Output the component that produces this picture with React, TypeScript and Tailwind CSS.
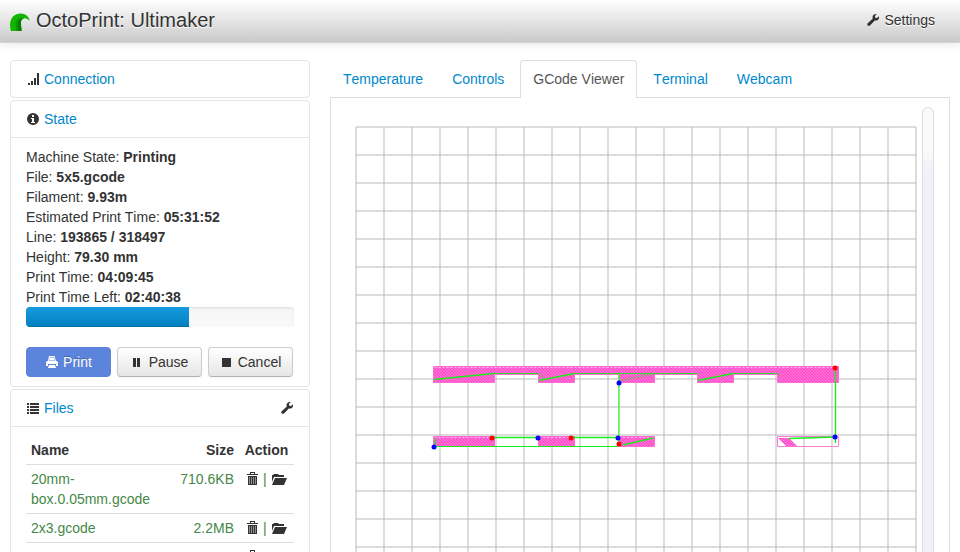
import type { ReactNode } from "react";

const ICON = "h-3.5 w-3.5 shrink-0 fill-current";

function SignalIcon() {
  return (
    <svg viewBox="0 0 14 14" className={ICON} shapeRendering="crispEdges" aria-hidden="true">
      <path d="M2 11h2v2H2zM5 9h2v4H5zM8 6h2v7H8zM11 1h2v12h-2z" />
    </svg>
  );
}

function InfoIcon() {
  return (
    <svg viewBox="0 0 14 14" className={ICON} aria-hidden="true">
      <path fillRule="evenodd" d="M7 1a6 6 0 1 1 0 12A6 6 0 0 1 7 1zM6 3v2h2V3zM5 6v1h1v3H5v1h4v-1H8V6z" />
    </svg>
  );
}

function ListIcon() {
  return (
    <svg viewBox="0 0 14 14" className={ICON} shapeRendering="crispEdges" aria-hidden="true">
      <path d="M1 2h2v2H1zM4 2h9v2H4zM1 5h2v2H1zM4 5h9v2H4zM1 8h2v2H1zM4 8h9v2H4zM1 11h2v2H1zM4 11h9v2H4z" />
    </svg>
  );
}

function WrenchIcon() {
  return (
    <svg viewBox="0 0 14 14" className={ICON} aria-hidden="true">
      <path d="M10.8 1.1 8.9 3l.4 1.7 1.7.4 1.9-1.8c.4 1.3.1 2.6-.8 3.4-.9.9-2.100 1.100-3.200.7L4 12.400c-.6.6-1.600.6-2.300 0-.6-.6-.6-1.600 0-2.200l5.100-4.700c-.5-1.200-.3-2.500.6-3.400.9-.9 2.200-1.300 3.400-1z" />
    </svg>
  );
}

function PrintIcon() {
  return (
    <svg viewBox="0 0 14 14" className={ICON} aria-hidden="true">
      <path fillRule="evenodd" d="M4 1h5.500L11 6h1l1 1.500V11h-2V9H3v2H1V7.500L2 6h1zM4.700 2.500 4 6h6L9.200 2.500zM4 10h6l1 3H3z" />
      <path d="M4.500 3h4.700l.5 2.500H4z" />
    </svg>
  );
}

function PauseIcon() {
  return (
    <svg viewBox="0 0 14 14" className={ICON} shapeRendering="crispEdges" aria-hidden="true">
      <path d="M2 3h3v9H2zM6 3h3v9H6z" />
    </svg>
  );
}

function StopIcon() {
  return (
    <svg viewBox="0 0 14 14" className={ICON} shapeRendering="crispEdges" aria-hidden="true">
      <path d="M2 3h9v9H2z" />
    </svg>
  );
}

function TrashIcon() {
  return (
    <svg viewBox="-2 0 14 14" className={ICON} aria-hidden="true">
      <path d="M3 0h5v2h3v1H0V2h3zM4 1v1h3V1z" fillRule="evenodd" />
      <path d="M1 4h9v9H1z" opacity="0.55" />
      <path d="M1 4h9v1H1zM1 12h9v1H1zM1 4h1v9H1zM3 5h1v7H3zM5 5h1v7H5zM7 5h1v7H7zM9 4h1v9H9z" />
    </svg>
  );
}

function FolderIcon() {
  return (
    <svg viewBox="0 0 16 14" className="h-3.5 w-4 shrink-0 fill-current" aria-hidden="true">
      <path d="M1 3h1l1-1h4l1 1h5v2H3L1 10zM4 6h12l-3 7H1z" />
    </svg>
  );
}

function Logo() {
  return (
    <svg viewBox="0 -3 20 22" className="h-[22px] w-5 shrink-0" aria-hidden="true">
      <path d="M1 18C-1 12 .2 6.500 3 3.500 6 .6 10.500-.2 14 1c2.800 1 5 3.500 6 7-2-2-4-3-6-2.700-2.600.5-3.300 3.100-2.900 5.900.2 2.200.5 4.800.6 6.800z" fill="#12b600" />
      <path d="M14 5.300C9 4.300 6.200 7.300 6.400 11c0 2.500.3 4.800.3 7h5c-.4-2.500-1-5-.9-7.600.1-2.700 1.100-4.400 3.200-5.100z" fill="#0a7a08" />
      <path d="M14 5.300C8.800 3.900 5.300 7 5.500 11c0 2.500.6 4.800.6 7h2.100c.3-2 .1-4-.2-6-.4-3.600 2-6.300 6-6.700z" fill="#0c9a04" />
    </svg>
  );
}

function Panel({ icon, title, action, children }: { icon: ReactNode; title: string; action?: ReactNode; children?: ReactNode }) {
  return (
    <section className="mb-0.5 rounded border border-[#e5e5e5]">
      <div className="flex items-center justify-between px-[15px] py-2">
        <h2 className="flex items-center gap-1">
          {icon}
          <a href="#" className="text-[#0088cc]">{title}</a>
        </h2>
        {action}
      </div>
      {children && <div className="border-t border-[#e5e5e5] px-[15px] py-[9px]">{children}</div>}
    </section>
  );
}

const status = [
  ["Machine State", "Printing"],
  ["File", "5x5.gcode"],
  ["Filament", "9.93m"],
  ["Estimated Print Time", "05:31:52"],
  ["Line", "193865 / 318497"],
  ["Height", "79.30 mm"],
  ["Print Time", "04:09:45"],
  ["Print Time Left", "02:40:38"],
];

const files = [
  { name: "20mm-box.0.05mm.gcode", size: "710.6KB" },
  { name: "2x3.gcode", size: "2.2MB" },
];

const tabs = ["Temperature", "Controls", "GCode Viewer", "Terminal", "Webcam"];

const BUTTON = "flex h-[30px] w-[85px] items-center justify-center gap-1 rounded border";
const PLAIN =
  "border-[#cccccc] border-b-[#b3b3b3] bg-linear-to-b from-white to-[#e6e6e6] text-[#333333] shadow-[inset_0_1px_0_rgba(255,255,255,0.2),0_1px_2px_rgba(0,0,0,0.05)]";

const gridLines = Array.from({ length: 21 }, (_, i) => i * 28);

const retracts = [[479, 241], [136, 311], [215, 311], [263, 317]];
const restarts = [[263, 256], [78, 320], [182, 311], [262, 311], [479, 310]];

function GCodeCanvas() {
  return (
    <svg viewBox="-10 -20 572 600" className="h-[600px] w-[572px] shrink-0" role="img" aria-label="GCode layer">
      <defs>
        <pattern id="infill" width="3" height="3" patternUnits="userSpaceOnUse">
          <rect width="3" height="3" fill="#ff52ca" />
          <path d="M0 0l3 3M-1 2l2 2M2-1l2 2" stroke="#ff7adb" strokeWidth="1" />
        </pattern>
      </defs>
      <g stroke="#bbbbbb" strokeOpacity="0.5" strokeWidth="2">
        {gridLines.map((p) => (
          <line key={`v${p}`} x1={p} x2={p} y1="0" y2="560" />
        ))}
        {gridLines.map((p) => (
          <line key={`h${p}`} x1="0" x2="560" y1={p} y2={p} />
        ))}
      </g>
      <g fill="url(#infill)" stroke="#ff6ad2" strokeWidth="1">
        <path d="M77.500 239.500H482.500V255.500H421.500V247.500H377.500V255.500H341.500V247.500H298.500V255.500H262.500V247.500H218.500V255.500H182.500V247.500H138.500V255.500H77.500Z" />
        <path d="M77.500 309.500H138.500V319.500H77.500ZM182.500 309.500H218.500V319.500H182.500ZM262.500 309.500H298.500V319.500H262.500Z" />
        <path d="M422 311H433L441 319H430Z" stroke="none" />
      </g>
      <path d="M421.500 309.500H482.500V319.500H421.500Z" fill="none" stroke="#ff7bd8" />
      <path d="M78.500 240.500H481M78.500 310.500H138M183 310.500H218M263 310.500H298" stroke="#ffb3ea" strokeDasharray="2 2" />
      <g fill="none" stroke="#18ee18" strokeWidth="1.300">
        <path d="M78 252.500 138 246.500M183 253.500 218 246.500M342 253.500 377 246.500" />
        <path d="M138 246.500H183L188 252M218 246.500H342M377 246.500H421L423 249" stroke="#30dc30" strokeWidth="1" />
        <path d="M263 254 298 246.500" opacity="0.35" />
        <path d="M136 310.500H182M215 310.500H262" />
        <path d="M78 319.500H262" strokeWidth="1" />
        <path d="M80 311 79 319" />
        <path d="M262.900 247V318" stroke="#50f050" strokeWidth="1.600" />
        <path d="M479.500 241V316" />
        <path d="M267 318 297 311M433 311.500 479 310" />
      </g>
      <g fill="#ff0000">
        {retracts.map(([x, y]) => (
          <circle key={`${x}-${y}`} cx={x} cy={y} r="2.500" />
        ))}
      </g>
      <g fill="#0000ff">
        {restarts.map(([x, y]) => (
          <circle key={`${x}-${y}`} cx={x} cy={y} r="2.500" />
        ))}
      </g>
    </svg>
  );
}

export default function App() {
  return (
    <div className="h-screen overflow-hidden bg-white font-['Liberation_Sans',Arial,sans-serif] text-sm text-[#333333] [font-kerning:none]">
      <header className="flex h-[43px] items-start justify-between border-b border-[#d4d4d4] bg-linear-to-b from-white to-[#cacaca] pt-2.5 pr-[25px] pl-2.5 leading-5 shadow-[0_1px_10px_rgba(0,0,0,0.1)] [text-shadow:0_1px_0_#ffffff]">
        <a href="#" className="flex items-start gap-1.5 text-xl leading-5">
          <Logo />
          <span>OctoPrint: Ultimaker</span>
        </a>
        <a href="#" className="flex items-center gap-1">
          <WrenchIcon />
          Settings
        </a>
      </header>

      <div className="flex items-start gap-5 px-2.5 pt-[17px] leading-5">
        <aside className="w-[300px] shrink-0">
          <Panel icon={<SignalIcon />} title="Connection" />
          <Panel icon={<InfoIcon />} title="State">
            {status.map(([label, value]) => (
              <p key={label}>
                {label}: <strong>{value}</strong>
              </p>
            ))}
            <div
              role="progressbar"
              aria-label="Print progress"
              aria-valuenow={61}
              className="mb-5 h-5 overflow-hidden rounded bg-linear-to-b from-[#f5f5f5] to-[#f9f9f9] shadow-[inset_0_1px_2px_rgba(0,0,0,0.1)]"
            >
              <div className="h-full w-[61%] bg-linear-to-b from-[#149bdf] to-[#0480be] shadow-[inset_0_-1px_0_rgba(0,0,0,0.15)]" />
            </div>
            <div className="flex gap-1.5">
              <button disabled className={`${BUTTON} border-[#5c84dc] bg-[#5c84dc] text-white [text-shadow:0_-1px_0_rgba(0,0,0,0.25)]`}>
                <PrintIcon />
                Print
              </button>
              <button className={`${BUTTON} ${PLAIN}`}>
                <PauseIcon />
                Pause
              </button>
              <button className={`${BUTTON} ${PLAIN}`}>
                <StopIcon />
                Cancel
              </button>
            </div>
          </Panel>
          <Panel
            icon={<ListIcon />}
            title="Files"
            action={
              <button aria-label="File list settings">
                <WrenchIcon />
              </button>
            }
          >
            <table className="w-full table-fixed">
              <thead>
                <tr>
                  <th className="px-[5px] py-1 text-left">Name</th>
                  <th className="w-16 px-[5px] py-1 text-right">Size</th>
                  <th className="w-[55px] px-[5px] py-1 text-center">Action</th>
                </tr>
              </thead>
              <tbody>
                {files.map((file) => (
                  <tr key={file.name} className="border-t border-[#dddddd] align-top text-[#468847]">
                    <td className="px-[5px] py-1">{file.name}</td>
                    <td className="px-[5px] py-1 text-right">{file.size}</td>
                    <td className="py-1 pl-1.5">
                      <div className="flex h-5 items-center gap-1">
                        <button aria-label={`Delete ${file.name}`} className="text-[#333333]">
                          <TrashIcon />
                        </button>
                        |
                        <button aria-label={`Load ${file.name}`} className="text-[#333333]">
                          <FolderIcon />
                        </button>
                      </div>
                    </td>
                  </tr>
                ))}
                <tr className="border-t border-[#dddddd] align-top">
                  <td colSpan={2} />
                  <td className="py-1 pl-1.5">
                    <div className="flex h-5 items-center">
                      <button aria-label="Delete file">
                        <TrashIcon />
                      </button>
                    </div>
                  </td>
                </tr>
              </tbody>
            </table>
          </Panel>
        </aside>

        <main className="min-w-0 flex-1">
          <nav className="flex gap-[3px]">
            {tabs.map((tab) => (
              <a
                key={tab}
                href="#"
                className={
                  tab === "GCode Viewer"
                    ? "-mb-px rounded-t border border-b-0 border-[#dddddd] bg-white px-3 pt-2 pb-[9px] text-[#555555]"
                    : "border border-b-0 border-transparent px-3 py-2 text-[#0088cc]"
                }
              >
                {tab}
              </a>
            ))}
          </nav>
          <div className="flex items-start justify-between border border-[#dddddd] px-[15px] py-[9px]">
            <GCodeCanvas />
            <input
              type="range"
              aria-label="Layer"
              min={0}
              max={100}
              defaultValue={100}
              className="h-[600px] w-3 appearance-none rounded-md border border-[#dddddd] bg-linear-to-b from-[#f9fafc] from-[40px] to-[#eff3f7] to-[64px] [writing-mode:vertical-lr] [&::-webkit-slider-thumb]:h-3 [&::-webkit-slider-thumb]:w-3"
            />
          </div>
        </main>
      </div>
    </div>
  );
}
